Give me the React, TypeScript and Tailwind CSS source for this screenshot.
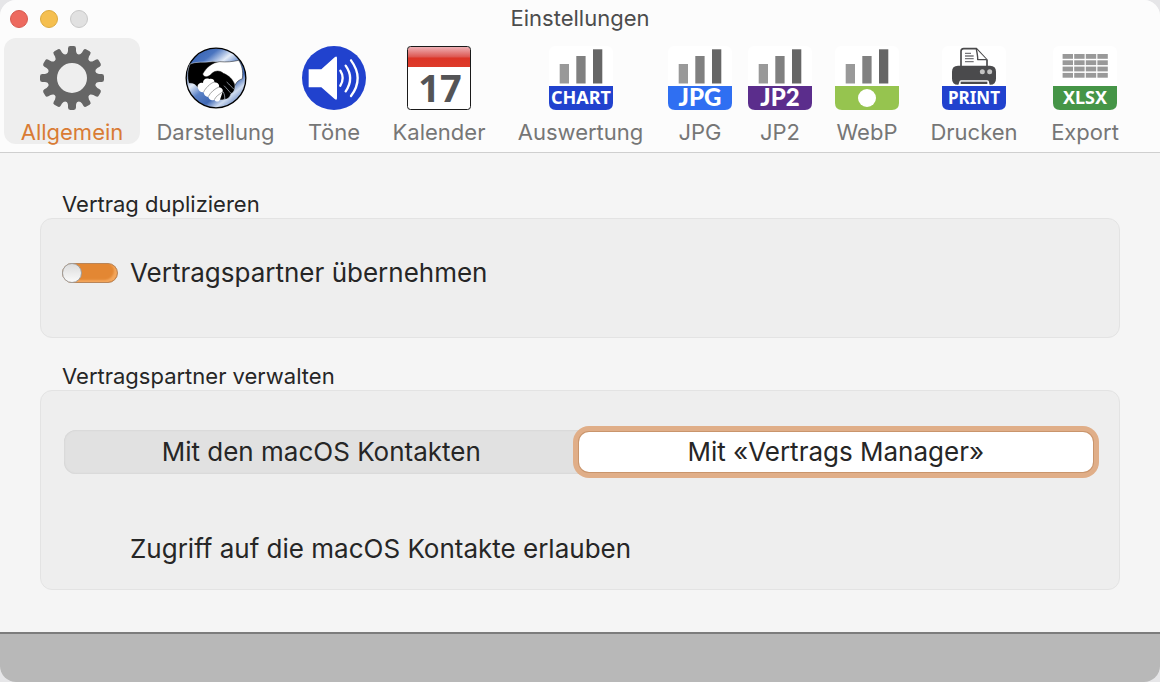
import React, { useState } from 'react';

const badgeFont = '"Noto Sans", "Open Sans", sans-serif';
const wideBadgeFont = 'Lato, "Noto Sans", sans-serif';

const GearIcon = () => (
  <svg viewBox="-32 -32 64 64" className="size-16 shrink-0" fill="#666666" aria-hidden="true">
    {Array.from({ length: 12 }, (_, i) => (
      <path
        key={i}
        transform={`rotate(${i * 30})`}
        d="M-6.4 -22.5 Q-4 -25 -4 -27 V-29.6 Q-4 -32 -1.8 -32 H1.8 Q4 -32 4 -29.6 V-27 Q4 -25 6.4 -22.5 Z"
      />
    ))}
    <circle r="19.7" fill="none" stroke="#666666" strokeWidth="9.4" />
  </svg>
);

const HandshakeIcon = () => (
  <svg viewBox="0 0 192 192" className="size-16 shrink-0" aria-hidden="true">
    <defs>
      <linearGradient id="globe" x1="0.1" y1="0" x2="0.9" y2="1">
        <stop offset="0" stopColor="#2f5cb0" />
        <stop offset="0.22" stopColor="#4a74bf" />
        <stop offset="0.38" stopColor="#e4ecf8" />
        <stop offset="0.52" stopColor="#5b82c6" />
        <stop offset="0.68" stopColor="#3f68b4" />
        <stop offset="0.8" stopColor="#cfdcf0" />
        <stop offset="1" stopColor="#2c57a8" />
      </linearGradient>
    </defs>
    <circle cx="96" cy="96" r="89.5" fill="url(#globe)" stroke="#000" strokeWidth="4" />
    <path
      d="M18 54 C36 46 60 50 82 47 C94 46 104 48 112 54 L126 76 C142 88 153 106 153 120 C153 132 148 141 141 143 C138 154 131 160 122 160 C114 164 106 162 100 156 L40 124 C36 116 26 111 14 112 C9 92 10 72 18 54 Z"
      fill="#000"
      stroke="#d9e0ea"
      strokeWidth="1.5"
    />
    <path
      d="M56 84 C68 63 84 50 107 47 C127 49 147 47 164 43 C174 58 178 75 175 98 C166 101 157 107 153 118 C147 100 134 88 118 82 C108 73 94 73 84 82 C74 93 61 97 56 84 Z"
      fill="#fff"
      stroke="#111"
      strokeWidth="1.5"
    />
    <path
      d="M41 124 C39 116 48 108 57 111 C57 100 66 95 76 99 C86 97 92 102 91 109 C103 110 107 117 105 124 C115 126 119 132 115 140 L108 161 C104 169 95 168 91 161 C82 166 75 160 73 153 C65 153 59 147 59 139 C50 140 43 134 41 124 Z"
      fill="#fff"
    />
    <g fill="none" stroke="#666" strokeWidth="1.8">
      <path d="M59 138 C63 128 79 111 91 108" />
      <path d="M73 152 C78 140 94 127 105 123" />
      <path d="M91 161 C95 151 106 145 115 138" />
    </g>
    <g fill="none" stroke="#c9d2e0" strokeWidth="2">
      <path d="M120 119 C128 127 135 136 141 142" />
      <path d="M117 137 C121 144 123 151 122 159" />
      <path d="M128 108 C137 116 144 124 150 130" />
    </g>
  </svg>
);

const SpeakerIcon = () => (
  <svg viewBox="0 0 192 192" className="size-16 shrink-0" aria-hidden="true">
    <circle cx="96" cy="96" r="96" fill="#2142ce" />
    <path d="M20 70 H58 L98 34 Q105 28 105 36 V156 Q105 165 98 159 L58 124 H20 Z" fill="#fff" />
    <g fill="none" stroke="#fff" strokeWidth="7" strokeLinecap="round">
      <path d="M115 74 Q129 96 115 119" />
      <path d="M131 59 Q158 97 131 136" />
      <path d="M147 43 Q187 97 147 150" />
    </g>
  </svg>
);

const CalendarIcon = () => (
  <svg viewBox="0 0 64 64" className="size-16 shrink-0 overflow-visible" aria-hidden="true">
    <defs>
      <linearGradient id="calTop" x1="0" y1="0" x2="0" y2="1">
        <stop offset="0" stopColor="#efb0b5" />
        <stop offset="0.48" stopColor="#dd5a54" />
        <stop offset="0.56" stopColor="#dc3527" />
        <stop offset="1" stopColor="#de3b2a" />
      </linearGradient>
    </defs>
    <rect x="0.5" y="0.5" width="63" height="63" rx="3" fill="#fff" />
    <path d="M1 21 V3 Q1 1 3 1 H61 Q63 1 63 3 V21 Z" fill="url(#calTop)" />
    <rect x="0.5" y="0.5" width="63" height="63" rx="3" fill="none" stroke="#1a1a1a" />
    <text x="33" y="56" fontFamily={badgeFont} fontWeight="700" fontSize="38" fill="#545456" textAnchor="middle">17</text>
  </svg>
);

interface BadgeIconProps {
  color: string;
  text?: string;
  wide?: boolean;
  fontSize?: number;
  children: React.ReactNode;
}

const BadgeIcon: React.FC<BadgeIconProps> = ({ color, text, wide = false, fontSize = 18, children }) => (
  <svg viewBox="0 0 64 64" className="size-16 shrink-0 overflow-visible" aria-hidden="true">
    <rect width="64" height="60" rx="6" fill="#fff" />
    {children}
    <path d="M0 40 H64 V57 Q64 64 57 64 H7 Q0 64 0 57 Z" fill={color} />
    {text ? (
      <text
        x="32"
        y={wide ? 60 : 58}
        fontFamily={wide ? wideBadgeFont : badgeFont}
        fontWeight={wide ? 900 : 700}
        fontSize={wide ? 24 : fontSize}
        fill="#fff"
        textAnchor="middle"
      >
        {text}
      </text>
    ) : (
      <circle cx="32" cy="52" r="9" fill="#fff" />
    )}
  </svg>
);

const Bars = () => (
  <>
    <rect x="10.7" y="18" width="9.3" height="19.5" fill="#999999" />
    <rect x="27.3" y="10" width="9.3" height="27.5" fill="#808080" />
    <rect x="44" y="3.3" width="9.3" height="34.2" fill="#666666" />
  </>
);

const Printer = () => (
  <g transform="scale(0.33333)">
    <path d="M57 66 V16 Q57 8 65 8 H103 L135 42 V66" fill="#fff" stroke="#4a4a4c" strokeWidth="5" />
    <path d="M103 9 Q108 34 107 41 H134" fill="#fff" stroke="#4a4a4c" strokeWidth="4" strokeLinejoin="round" />
    <path d="M69 22 H87 M69 30 H95 M69 38 H95 M69 47 H95" stroke="#77777b" strokeWidth="4" />
    <path d="M48 59 H144 Q162 59 162 77 V98 Q162 116 144 116 H48 Q30 116 30 98 V77 Q30 59 48 59 Z" fill="#4a4a4c" />
    <circle cx="121" cy="77" r="7.5" fill="#c4c4c4" />
    <circle cx="143" cy="77" r="7.5" fill="#c4c4c4" />
    <path d="M48 120 L53 105 Q54 103 58 103 H135 Q139 103 140 105 L144 120 Z" fill="#fff" />
    <rect x="56" y="107" width="80" height="7" fill="#4a4a4c" />
  </g>
);

const Sheet = () => (
  <>
    {[0, 1, 2, 3].map(row =>
      [0, 1, 2, 3].map(col => (
        <rect key={`${row}-${col}`} x={9.6 + col * 11.6} y={8 + row * 6.3} width="10.4" height="4.8" fill="#999999" />
      ))
    )}
  </>
);

const TABS = [
  { id: 'Allgemein', width: 'w-[136px]', icon: <GearIcon /> },
  { id: 'Darstellung', width: 'w-[151px]', icon: <HandshakeIcon /> },
  { id: 'Töne', width: 'w-[86px]', icon: <SpeakerIcon /> },
  { id: 'Kalender', width: 'w-[124px]', icon: <CalendarIcon /> },
  { id: 'Auswertung', width: 'w-[159px]', icon: <BadgeIcon color="#2142ce" text="CHART"><Bars /></BadgeIcon> },
  { id: 'JPG', width: 'w-20', icon: <BadgeIcon color="#2f6ff2" text="JPG" wide><Bars /></BadgeIcon> },
  { id: 'JP2', width: 'w-20', icon: <BadgeIcon color="#5b2d8c" text="JP2" wide><Bars /></BadgeIcon> },
  { id: 'WebP', width: 'w-[94px]', icon: <BadgeIcon color="#96c44f"><Bars /></BadgeIcon> },
  { id: 'Drucken', width: 'w-[120px]', icon: <BadgeIcon color="#2142ce" text="PRINT" fontSize={17}><Printer /></BadgeIcon> },
  { id: 'Export', width: 'w-[102px]', icon: <BadgeIcon color="#459547" text="XLSX"><Sheet /></BadgeIcon> },
];

const SOURCES = ['Mit den macOS Kontakten', 'Mit «Vertrags Manager»'];

export default function App() {
  const [tab, setTab] = useState('Allgemein');
  const [source, setSource] = useState(SOURCES[1]);
  const [copyPartner, setCopyPartner] = useState(false);

  return (
    <div className="min-h-screen bg-[#e6e6e8] flex font-['Inter','Liberation_Sans',sans-serif] text-[#262626]">
      <div className="flex-1 flex flex-col rounded-2xl overflow-hidden bg-[#f5f5f5]">
        <header className="bg-[#fcfcfc] border-b border-[#cfcfcf]">
          <div className="grid grid-cols-3 items-center h-[38px] px-[10px]">
            <div className="flex gap-3">
              <button aria-label="Schliessen" className="size-[18px] rounded-full bg-[#ed6a5f] border border-[#d65a50]" />
              <button aria-label="Minimieren" className="size-[18px] rounded-full bg-[#f5bf4f] border border-[#dba93f]" />
              <button aria-label="Zoomen" className="size-[18px] rounded-full bg-[#e1e1e1] border border-[#c8c8c8]" />
            </div>
            <h1 className="pb-0.5 text-center text-[22px] leading-7 text-[#4c4c4c]">Einstellungen</h1>
          </div>
          <nav className="flex px-1 pb-2">
            {TABS.map(({ id, width, icon }) => (
              <button
                key={id}
                onClick={() => setTab(id)}
                className={`${width} shrink-0 flex flex-col items-center gap-2.5 pt-2 rounded-xl text-[22px] leading-6 ${tab === id ? 'bg-[#eeeeee] text-[#d97b34]' : 'text-[#767676]'}`}
              >
                {icon}
                <span>{id}</span>
              </button>
            ))}
          </nav>
        </header>

        <main className="flex-1 px-10 pt-[37px]">
          <section>
            <h2 className="pl-[22px] text-[22px] leading-7">Vertrag duplizieren</h2>
            <div className="h-[120px] pl-[21px] pt-9 rounded-xl bg-[#eeeeee] border border-[#e3e3e3]">
              <label className="flex items-center gap-3 text-[26px] leading-9">
                <input
                  type="checkbox"
                  role="switch"
                  checked={copyPartner}
                  onChange={e => setCopyPartner(e.target.checked)}
                  className="appearance-none flex checked:justify-end w-14 h-5 rounded-full border border-[#b98558] bg-[#e38733] shadow-[inset_-3px_-2px_2px_#f3a65c] before:content-[''] before:size-5 before:-mt-px before:-ml-px before:rounded-full before:border before:border-[#a0a0a0] before:bg-linear-to-b before:from-[#dcdcdc] before:to-[#fafafa]"
                />
                Vertragspartner übernehmen
              </label>
            </div>
          </section>

          <section className="mt-6">
            <h2 className="pl-[22px] text-[22px] leading-7">Vertragspartner verwalten</h2>
            <div className="h-[200px] pl-[23px] pr-[26px] pt-[39px] rounded-xl bg-[#eeeeee] border border-[#e3e3e3]">
              <div className="grid grid-cols-2 h-11 rounded-xl bg-[#e1e1e1] shadow-[inset_0_0_2px_#c4c4c4]">
                {SOURCES.map(name => (
                  <button
                    key={name}
                    aria-pressed={source === name}
                    onClick={() => setSource(name)}
                    className={`my-0.5 rounded-[10px] text-[26px] leading-9 ${source === name ? 'bg-white shadow-[0_0_0_1px_#c9956c,0_0_0_6px_#e0ae88]' : ''}`}
                  >
                    {name}
                  </button>
                ))}
              </div>
              <p className="mt-[57px] pl-[66px] text-[26px] leading-9">Zugriff auf die macOS Kontakte erlauben</p>
            </div>
          </section>
        </main>

        <footer className="h-[50px] bg-[#b8b8b8] border-t-2 border-[#7c7c7c]" />
      </div>
    </div>
  );
}
